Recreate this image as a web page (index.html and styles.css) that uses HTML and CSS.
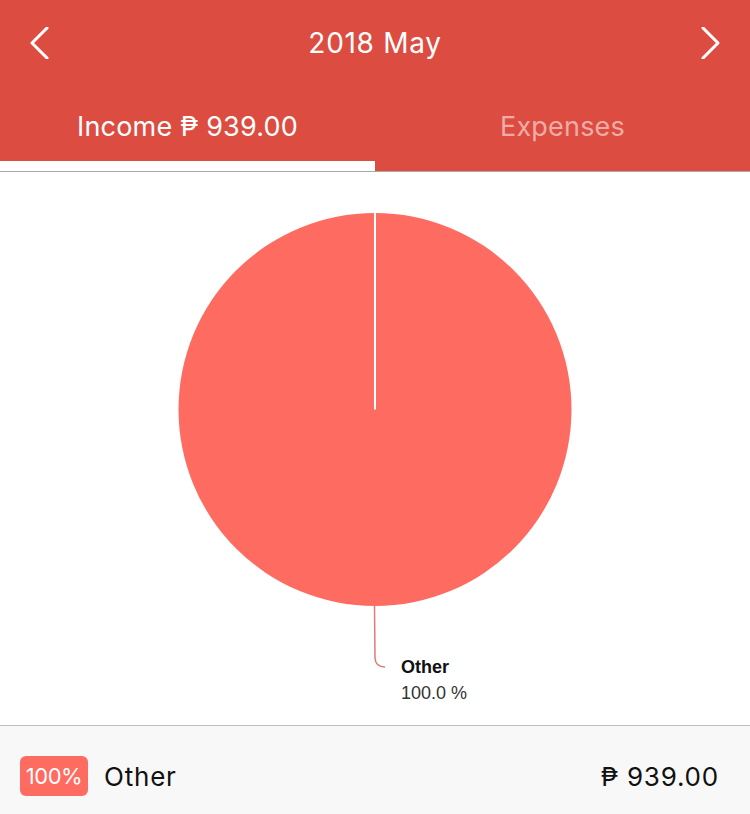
FILE: index.html
```html
<!DOCTYPE html>
<html lang="en">
<head>
  <meta charset="UTF-8" />
  <meta name="viewport" content="width=device-width, initial-scale=1.0" />
  <title>2018 May</title>
  <link rel="stylesheet" href="styles.css">
</head>
<body>
  <div class="header">
    <div class="nav">
      <button class="nav-btn" aria-label="Previous month">
        <svg width="20" height="32" viewBox="0 0 20 32"><polyline points="17,1 2,16 17,31" /></svg>
      </button>
      <div class="title">2018 May</div>
      <button class="nav-btn" aria-label="Next month">
        <svg width="20" height="32" viewBox="0 0 20 32"><polyline points="3,1 18,16 3,31" /></svg>
      </button>
    </div>
    <div class="tabs">
      <div class="tab active">Income ₱ 939.00</div>
      <div class="tab">Expenses</div>
    </div>
  </div>

  <div class="chart">
    <svg width="750" height="553" viewBox="0 0 750 553">
      <circle cx="375" cy="237.5" r="196.5" fill="#fe6b61" />
      <line x1="375" y1="41" x2="375" y2="237.5" stroke="#fff" stroke-width="2" />
      <path d="M374.5 434 L375 486 Q375.5 495 385 495" fill="none" stroke="#e07a78" stroke-width="1.5" />
      <text x="401" y="501" class="label-name">Other</text>
      <text x="401" y="527" class="label-value">100.0 %</text>
    </svg>
  </div>

  <div class="list">
    <div class="row">
      <span class="badge">100%</span>
      <span class="row-name">Other</span>
      <span class="row-amount">₱ 939.00</span>
    </div>
  </div>
</body>
</html>
```

FILE: styles.css
```css
body {
  margin: 0;
  padding: 0;
  background-color: #fff;
  font-family: 'Inter', 'Roboto', sans-serif;
  overflow: hidden;
}

.header {
  background-color: #dd4c41;
  color: #fff;
  border-bottom: 1px solid #a9a9a9;
}

.nav {
  height: 86px;
  display: flex;
  align-items: center;
  justify-content: space-between;
  padding: 0 30px;
}

.nav-btn {
  background: none;
  border: none;
  padding: 0;
  width: 20px;
  height: 32px;
  cursor: pointer;
}

.nav-btn polyline {
  fill: none;
  stroke: #fff;
  stroke-width: 3;
  stroke-linecap: round;
  stroke-linejoin: round;
}

.title {
  font-size: 28px;
  letter-spacing: 0.7px;
}

.tabs {
  display: flex;
}

.tab {
  flex: 1;
  height: 85px;
  padding-top: 6px;
  box-sizing: border-box;
  display: flex;
  align-items: center;
  justify-content: center;
  font-size: 27px;
  letter-spacing: 0.2px;
  color: rgba(255,255,255,0.55);
  border-bottom: 10px solid transparent;
}

.tab.active {
  color: #fff;
  border-bottom-color: #fff;
}

.chart svg {
  display: block;
}

.label-name {
  font-family: 'Liberation Sans', sans-serif;
  font-weight: 700;
  font-size: 18px;
  fill: #111;
}

.label-value {
  font-family: 'Liberation Sans', sans-serif;
  font-size: 18px;
  fill: #333;
}

.list {
  border-top: 1px solid #bdbdbd;
  background-color: #f8f8f8;
}

.row {
  display: flex;
  align-items: center;
  padding: 30px 31px 30px 20px;
}

.badge {
  background-color: #fe6b61;
  color: #fff;
  border-radius: 6px;
  height: 40px;
  width: 68px;
  display: flex;
  align-items: center;
  justify-content: center;
  font-size: 22px;
  letter-spacing: -0.5px;
}

.row-name {
  margin-left: 16px;
  font-size: 26px;
  letter-spacing: 0.8px;
  color: #111;
}

.row-amount {
  margin-left: auto;
  font-size: 26px;
  letter-spacing: 0.8px;
  color: #111;
}
```
